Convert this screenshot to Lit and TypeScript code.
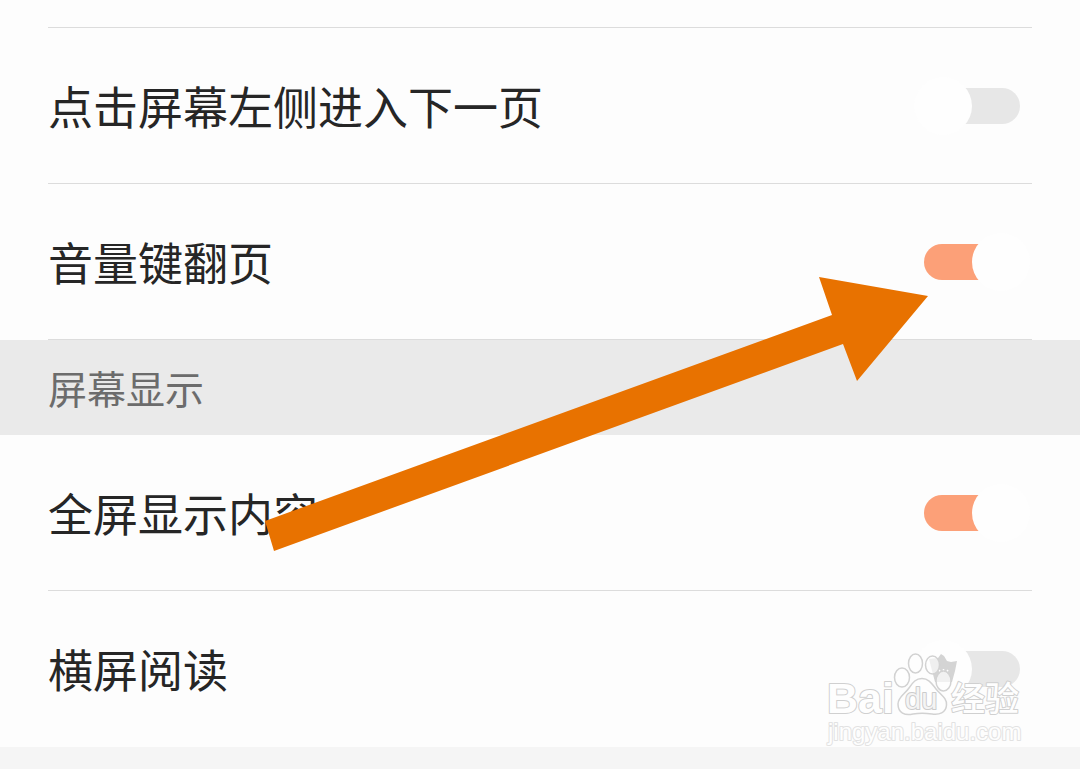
import { LitElement, html, css } from "lit";
import { customElement, property } from "lit/decorators.js";

@customElement("setting-row")
export class SettingRow extends LitElement {
  @property() label = "";
  @property({ type: Boolean }) on = false;

  static styles = css`
    :host {
      display: block;
      padding: 0 48px;
    }
    .row {
      display: flex;
      align-items: center;
      justify-content: space-between;
      padding: 46px 12px 45px 0;
      border-bottom: 1px solid #dcdcdc;
      font-size: 45px;
      line-height: 64px;
      color: #262626;
      cursor: pointer;
    }
    :host([last]) .row {
      border-bottom-color: transparent;
    }
    .switch {
      appearance: none;
      display: flex;
      align-items: center;
      flex: none;
      width: 96px;
      height: 36px;
      margin: 0;
      border-radius: 18px;
      background: #e7e7e7;
      cursor: pointer;
    }
    .switch::before {
      content: "";
      flex: none;
      width: 58px;
      height: 58px;
      margin: 0 -10px;
      border-radius: 50%;
      background: #fefefe;
    }
    .switch:checked {
      justify-content: flex-end;
      background: #fca078;
    }
  `;

  render() {
    return html`
      <label class="row">
        <span>${this.label}</span>
        <input class="switch" type="checkbox" .checked=${this.on} />
      </label>
    `;
  }
}

@customElement("app-root")
export class AppRoot extends LitElement {
  static styles = css`
    :host {
      display: block;
      position: relative;
      min-height: 100vh;
      overflow: hidden;
      background: #f5f5f5;
      font-family: "Noto Sans CJK SC", sans-serif;
    }
    .group {
      background: #fdfdfd;
    }
    .edge {
      height: 27px;
      margin: 0 48px;
      border-bottom: 1px solid #dcdcdc;
    }
    .heading {
      margin: 0;
      padding: 19px 48px 20px;
      background: #eaeaea;
      color: #6c6c6c;
      font-size: 39px;
      font-weight: 400;
      line-height: 56px;
    }
    .arrow {
      position: absolute;
      top: 276px;
      right: 152px;
      pointer-events: none;
    }
    .mark {
      position: absolute;
      top: 645px;
      right: 50px;
      pointer-events: none;
    }
    .outlined {
      fill: #fefefe;
      stroke: #d0d0d0;
      stroke-width: 2px;
      stroke-linejoin: round;
      paint-order: stroke;
    }
    .paw {
      stroke: #d2d2d2;
      stroke-width: 1.5px;
      paint-order: normal;
    }
    .brand {
      font: bold 43px "Liberation Sans", sans-serif;
    }
    .inner {
      font: 29px "Liberation Sans", sans-serif;
      fill: #f4f4f4;
      stroke: #cccccc;
    }
    .name {
      font: 500 34px "Noto Sans CJK SC", sans-serif;
    }
    .site {
      font: 24px "Liberation Sans", sans-serif;
      stroke: #e2e2e2;
    }
  `;

  render() {
    return html`
      <section class="group">
        <div class="edge"></div>
        <setting-row label="点击屏幕左侧进入下一页"></setting-row>
        <setting-row label="音量键翻页" on></setting-row>
      </section>
      <h2 class="heading">屏幕显示</h2>
      <section class="group">
        <setting-row label="全屏显示内容" on></setting-row>
        <setting-row label="横屏阅读" last></setting-row>
      </section>

      <svg class="arrow" width="664" height="276" viewBox="264 276 664 276" aria-hidden="true">
        <path d="M928 296 L857 381 L843 344 L274 551 L265 521 L832 315 L819 277 Z" fill="#e87200" />
      </svg>

      <svg class="mark" width="210" height="104" viewBox="820 645 210 104" role="img" aria-label="Baidu 经验">
        <path d="M929 659 L938 658 L941 654 L944 656 L947 661 L951 662 L957 661 L955 671 L952 682 L935 682 Z" fill="#d4d4d4" />
        <path d="M941 673 L939 670 M943.5 672 V669 M946 673 L948 670" stroke="#fefefe" stroke-width="1.5" fill="none" />
        <text class="outlined brand" x="827" y="713">Bai</text>
        <g class="outlined paw">
          <ellipse cx="902" cy="677.5" rx="7.5" ry="9.5" />
          <ellipse cx="915.5" cy="663.5" rx="7" ry="9.5" />
          <ellipse cx="932.5" cy="665" rx="7" ry="9" fill-opacity=".65" />
          <ellipse cx="943.5" cy="681" rx="7.5" ry="10" fill-opacity=".7" />
          <path d="M922 678.5 C929 678.5 932 684 936 689 C941 695 947 698 946.5 705 C946 713 939 715 932 714 C925 713 919 713 913 714 C905 716 898 713 898 704 C898 697 905 694 909 688 C913 682 916 678.5 922 678.5 Z" />
        </g>
        <text class="outlined inner" x="905" y="709">du</text>
        <text class="outlined name" x="951" y="711">经验</text>
        <text class="outlined site" x="828" y="740">jingyan.baidu.com</text>
      </svg>
    `;
  }
}
